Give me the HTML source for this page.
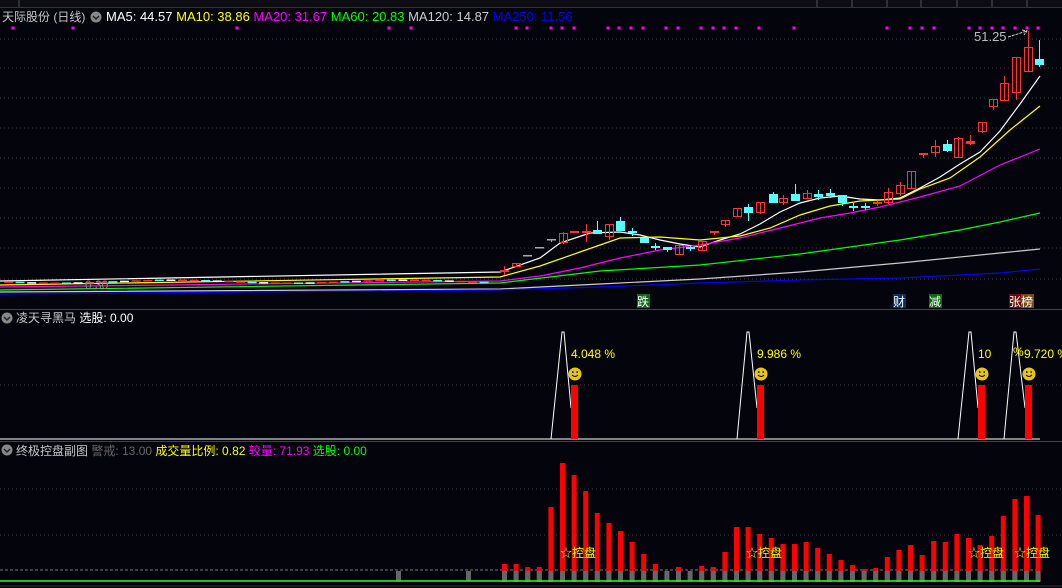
<!DOCTYPE html>
<html><head><meta charset="utf-8"><style>
html,body{margin:0;padding:0;background:#04040c;width:1062px;height:588px;overflow:hidden;font-family:"Liberation Sans","Noto Sans CJK SC",sans-serif}
svg{position:absolute;left:0;top:0}
text{font-family:"Liberation Sans","Noto Sans CJK SC",sans-serif}
</style></head><body>
<svg id="s" width="1062" height="588" xmlns="http://www.w3.org/2000/svg">
<rect width="1062" height="588" fill="#04040c"/>
<rect x="0" y="0" width="1062" height="7" fill="#0c0c12"/>
<line x1="0" y1="7.5" x2="1062" y2="7.5" stroke="#333" />
<line x1="19" y1="0" x2="19" y2="7" stroke="#555"/>
<g stroke="#555"><line x1="817" y1="0" x2="817" y2="7"/><line x1="852" y1="0" x2="852" y2="7"/><line x1="887" y1="0" x2="887" y2="7"/><line x1="921" y1="0" x2="921" y2="7"/><line x1="957" y1="0" x2="957" y2="7"/><line x1="992" y1="0" x2="992" y2="7"/><line x1="1027" y1="0" x2="1027" y2="7"/></g>
<g id="grid" stroke="#3a3a3a" stroke-dasharray="1,3"></g>
<text x="2" y="21" font-size="12" fill="#c8c8c8">天际股份 (日线)</text>
<circle cx="96" cy="17" r="5.5" fill="#888"/><path d="M93 16 l3 3 l3 -3" stroke="#222" fill="none" stroke-width="1.5"/>
<text x="106" y="21" font-size="13"><tspan fill="#fff">MA5: 44.57 </tspan><tspan fill="#ff0">MA10: 38.86 </tspan><tspan fill="#f0f">MA20: 31.67 </tspan><tspan fill="#0f0">MA60: 20.83 </tspan><tspan fill="#ccc">MA120: 14.87 </tspan><tspan fill="#00f">MA250: 11.56</tspan></text>
<g id="dots" fill="#f0f"></g>
<g id="ma" fill="none" stroke-width="1.2"></g>
<g id="cd"></g>
<text x="974" y="41" font-size="13" fill="#bbb">51.25</text>
<path d="M1008 37 L1027 31 M1022 30 l5 1 l-3 4" stroke="#ccc" fill="none" stroke-dasharray="3,1"/>
<text x="85" y="289" font-size="12" fill="#888">0.30</text>
<rect x="637" y="294" width="13" height="14" fill="#0a6b14"/><text x="637" y="306" font-size="12" fill="#fff">跌</text>
<rect x="893" y="294" width="13" height="14" fill="#0a3060"/><text x="893" y="306" font-size="12" fill="#fff">财</text>
<rect x="929" y="294" width="13" height="14" fill="#0a6b14"/><text x="929" y="306" font-size="12" fill="#fff">减</text>
<rect x="1009" y="294" width="12" height="14" fill="#6a0c0c"/><rect x="1021" y="294" width="13" height="14" fill="#7a4a10"/><text x="1009" y="306" font-size="12" fill="#fff">张榜</text>
<line x1="0" y1="309.5" x2="1062" y2="309.5" stroke="#444"/>
<circle cx="7" cy="318" r="5.5" fill="#888"/><path d="M4 317 l3 3 l3 -3" stroke="#222" fill="none" stroke-width="1.5"/>
<text x="16" y="322" font-size="12" fill="#c8c8c8">凌天寻黑马 <tspan fill="#fff">选股: 0.00</tspan></text>
<line x1="0" y1="385" x2="1062" y2="385" stroke="#3a3a3a" stroke-dasharray="1,3"/>
<g id="p2"></g>
<line x1="0" y1="441.5" x2="1062" y2="441.5" stroke="#444"/>
<circle cx="7" cy="450" r="5.5" fill="#888"/><path d="M4 449 l3 3 l3 -3" stroke="#222" fill="none" stroke-width="1.5"/>
<text x="16" y="455" font-size="12" fill="#c8c8c8">终极控盘副图 <tspan fill="#666">警戒: 13.00 </tspan><tspan fill="#ff0">成交量比例: 0.82 </tspan><tspan fill="#f0f">较量: 71.93 </tspan><tspan fill="#0f0">选股: 0.00</tspan></text>
<line x1="0" y1="489" x2="1062" y2="489" stroke="#3a3a3a" stroke-dasharray="1,3"/>
<line x1="0" y1="535" x2="1062" y2="535" stroke="#3a3a3a" stroke-dasharray="1,3"/>
<line x1="0" y1="570" x2="1040" y2="570" stroke="#777" stroke-dasharray="3,2"/>
<g id="p3"></g>
<line x1="0" y1="581" x2="1040" y2="581" stroke="#2f2" stroke-width="1.5"/>
<line x1="0" y1="586" x2="1062" y2="586" stroke="#333"/>
<g font-size="12" fill="#ff0">
<text x="560" y="557">☆控盘</text><text x="746" y="557">☆控盘</text><text x="968" y="557">☆控盘</text><text x="1014" y="557">☆控盘</text>
<text x="571" y="358">4.048 %</text><text x="757" y="358">9.986 %</text><text x="978" y="358">10</text><text x="1013" y="356">%</text><text x="1024" y="358">9.720 %</text>
</g>
</svg>
<script>
var NS="http://www.w3.org/2000/svg";
function el(p,t,a){var e=document.createElementNS(NS,t);for(var k in a)e.setAttribute(k,a[k]);document.getElementById(p).appendChild(e);return e;}
[39,68,98,128,158,188,218,248,279].forEach(function(y){el('grid','line',{x1:0,y1:y,x2:1062,y2:y});});
[13,73,237,389,411,516,527,551,562,574,608,619,631,643,666,678,701,713,724,736,759,794,887,910,922,934,969,980,992,1003,1015,1027,1038].forEach(function(x){el('dots','rect',{x:x-1.5,y:26.5,width:3,height:3});});
var mas=[["#fff","0,281 500,272 540,258 560,243 590,233 620,232 640,235 660,240 680,244 700,247 720,240 740,234 760,224 780,212 800,203 820,198 840,196 860,199 880,200 900,198 920,188 940,177 960,164 980,152 1000,131 1020,104 1040,76"],
["#ff0","0,285 500,277 540,266 580,252 620,238 660,237 700,240 740,236 770,228 800,215 830,206 860,201 900,199 920,189 950,178 980,157 1010,130 1040,106"],
["#f0f","0,287 500,281 540,276 580,268 620,258 660,250 700,245 740,238 780,228 820,218 850,213 880,207 920,197 960,186 1000,165 1040,149"],
["#0f0","0,290 500,283 600,271 700,265 800,254 900,240 960,230 1000,222 1040,213"],
["#ccc","0,292 500,289 600,284 700,279 800,272 900,263 1000,253 1040,249"],
["#00f","0,294 500,290 600,287 700,283 800,280 900,278 1000,273 1040,269"]];
mas.forEach(function(m){el('ma','polyline',{points:m[1],stroke:m[0]});});
var C=[[504,270,272,266,275,'r'],[516,263,267,263,267,'r'],[527,255,256,255,256,'g'],[539,247,248,247,248,'g'],[551,239,240,239,242,'g'],[563,233,243,232,244,'r'],[574,231,233,231,233,'r'],[586,231,233,224,242,'r'],[597,230,234,221,234,'c'],[609,224,237,224,240,'r'],[620,221,231,217,231,'c'],[632,231,233,228,236,'c'],[644,238,243,238,243,'c'],[655,246,248,243,250,'c'],[667,247,250,247,252,'c'],[679,245,255,245,255,'r'],[690,247,249,245,251,'c'],[702,241,251,241,251,'r'],[714,231,233,231,235,'r'],[725,220,225,220,227,'r'],[737,208,217,208,217,'r'],[748,207,213,204,221,'c'],[760,202,213,202,214,'r'],[773,194,203,192,203,'c'],[783,198,203,195,205,'r'],[795,194,201,184,201,'c'],[807,193,199,190,199,'r'],[818,194,197,190,200,'c'],[830,193,196,189,198,'c'],[842,195,203,195,206,'c'],[853,206,208,203,211,'c'],[865,206,208,203,210,'c'],[877,202,204,201,206,'r'],[888,192,203,188,204,'r'],[900,185,194,182,196,'r'],[911,171,189,171,189,'r'],[923,153,155,153,158,'r'],[935,146,153,140,157,'r'],[947,144,151,140,152,'c'],[958,138,158,137,158,'r'],[970,141,144,135,145,'r'],[982,122,132,122,133,'r'],[993,99,107,99,110,'r'],[1004,83,101,76,101,'r'],[1016,57,93,57,100,'r'],[1028,47,72,31,72,'r'],[1039,59,65,40,67,'c']];
C.forEach(function(c){var col=c[5]=='r'?'#f33':(c[5]=='c'?'#5ff':'#aaa');
el('cd','line',{x1:c[0]+.5,y1:c[3],x2:c[0]+.5,y2:c[4],stroke:col});
var h=c[2]-c[1];
if(c[5]=='r'&&h>3)el('cd','rect',{x:c[0]-3.5,y:c[1]+.5,width:8,height:h-1,fill:'none',stroke:col});
else el('cd','rect',{x:c[0]-4,y:c[1],width:9,height:Math.max(h,1.5),fill:col});});
for(var x=8;x<495;x+=11.6){var y=281+Math.sin(x/37)*1.5;var cl=["#f33","#5ff","#fff","#f33"][Math.floor(x/11.6)%4];el('cd','rect',{x:x-4,y:y,width:9,height:1.5,fill:cl});}
el('p2','line',{x1:0,y1:439,x2:1040,y2:439,stroke:'#fff','stroke-width':1});
[[551,563,571,575],[737,748,757,761],[958,970,978,982],[1004,1015,1025,1029]].forEach(function(s){
el('p2','polyline',{points:s[0]+',439 '+(s[1]-1)+',332 '+(s[1]+1)+',332 '+(s[2])+',408',fill:'none',stroke:'#fff'});
el('p2','rect',{x:s[2],y:385,width:7,height:54,fill:'#f00'});
var g=s[3];el('p2','circle',{cx:g,cy:374,r:6.5,fill:'#e6c419'});
el('p2','circle',{cx:g-2.2,cy:372,r:.9,fill:'#000'});el('p2','circle',{cx:g+2.2,cy:372,r:.9,fill:'#000'});
el('p2','path',{d:'M'+(g-3)+' 375 q3 3 6 0',stroke:'#000',fill:'none'});});
var T=[564,564,567,567,507,463,475,491,513,523,531,542,554,564,570,567,571,566,567,552,527,527,534,538,544,544,542,548,554,560,565,569,568,557,550,545,555,541,542,534,538,545,536,516,499,496,515];
T.forEach(function(t,i){var x=502+i*11.6;
if(t<570)el('p3','rect',{x:x,y:t,width:5,height:582-t,fill:'#f00'});
el('p3','rect',{x:x,y:571,width:5,height:10,fill:'#666'});});
el('p3','rect',{x:396,y:571,width:5,height:10,fill:'#666'});
el('p3','rect',{x:466,y:571,width:5,height:10,fill:'#666'});
</script>
</body></html>
